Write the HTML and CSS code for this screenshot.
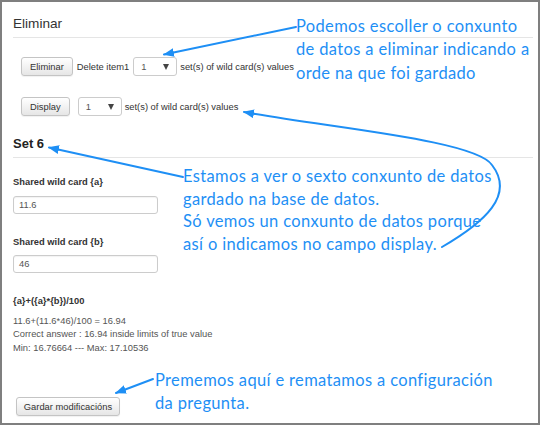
FILE: index.html
```html
<!DOCTYPE html>
<html lang="gl">
<head>
<meta charset="utf-8">
<title>Eliminar</title>
<link rel="stylesheet" href="styles.css">
</head>
<body>
<div class="frame">
  <h2 class="section-title">Eliminar</h2>
  <div class="controls">
    <div class="row row-delete">
      <button class="btn">Eliminar</button>
      <span class="txt">Delete item1</span>
      <span class="select"><span class="select-value">1</span><span class="caret"></span></span>
      <span class="txt">set(s) of wild card(s) values</span>
    </div>
    <div class="row row-display">
      <button class="btn">Display</button>
      <span class="select"><span class="select-value">1</span><span class="caret"></span></span>
      <span class="txt">set(s) of wild card(s) values</span>
    </div>
  </div>

  <h3 class="set-title">Set 6</h3>

  <div class="field field-a">
    <div class="field-label">Shared wild card {a}</div>
    <div class="input">11.6</div>
  </div>
  <div class="field field-b">
    <div class="field-label">Shared wild card {b}</div>
    <div class="input">46</div>
  </div>

  <div class="formula">{a}+({a}*{b})/100</div>
  <div class="result">
    <div>11.6+(11.6*46)/100 = 16.94</div>
    <div>Correct answer : 16.94 inside limits of true value</div>
    <div>Min: 16.76664 --- Max: 17.10536</div>
  </div>

  <button class="btn btn-save">Gardar modificacións</button>

  <svg class="arrows" width="540" height="425" viewBox="0 0 540 425" xmlns="http://www.w3.org/2000/svg">
    <defs>
      <marker id="head" markerWidth="5.5" markerHeight="4.4" refX="5" refY="2.2" orient="auto" markerUnits="strokeWidth">
        <path d="M0,0 L5.5,2.2 L0,4.4 Z" fill="#1e8ff5"/>
      </marker>
    </defs>
    <g fill="none" stroke="#1e8ff5" stroke-width="2" stroke-linecap="round">
      <path d="M296,27 L164,54.5" marker-end="url(#head)"/>
      <path d="M442,247 C485,222 515,195 492,165 C475,140 330,128 244,112" marker-end="url(#head)"/>
      <path d="M183,177 L49,147.5" marker-end="url(#head)"/>
      <path d="M153,379 L116,393" marker-end="url(#head)"/>
    </g>
  </svg>

  <div class="note note-1">Podemos escoller o conxunto<br>de datos a eliminar indicando a<br>orde na que foi gardado</div>
  <div class="note note-2">Estamos a ver o sexto conxunto de datos<br>gardado na base de datos.<br>Só vemos un conxunto de datos porque<br>así o indicamos no campo display.</div>
  <div class="note note-3">Prememos aquí e rematamos a configuración<br>da pregunta.</div>
</div>
</body>
</html>
```

FILE: styles.css
```css
html, body {
  margin: 0;
  padding: 0;
  background: #ffffff;
}

.frame {
  position: relative;
  box-sizing: border-box;
  width: 540px;
  height: 425px;
  border: 2px solid #7f7f7f;
  padding: 14px 5px 0 11px;
  font-family: "Liberation Sans", Arial, sans-serif;
  font-size: 9.35px;
  color: #333333;
  overflow: hidden;
}

.section-title {
  margin: 0;
  font-size: 13.6px;
  font-weight: normal;
  line-height: 16px;
  padding-bottom: 5px;
  border-bottom: 1px solid #e5e5e5;
  color: #333333;
}

.controls {
  display: flex;
  flex-direction: column;
  gap: 21px;
  margin-top: 19px;
  padding-left: 8px;
}

.row {
  display: flex;
  align-items: center;
  height: 19px;
}

.row-delete .txt:first-of-type {
  margin: 0 4px 0 4px;
}

.row-display .select {
  margin-left: 8px;
}

.select + .txt {
  margin-left: 3px;
}

.btn {
  box-sizing: border-box;
  height: 19px;
  padding: 0 8px;
  margin: 0;
  font-family: "Liberation Sans", Arial, sans-serif;
  font-size: 9.35px;
  color: #333333;
  background: linear-gradient(#ffffff, #e6e6e6);
  border: 1px solid #c4c4c4;
  border-radius: 3px;
  box-shadow: 0 1px 1px rgba(0, 0, 0, 0.06);
  line-height: 16px;
}

.select {
  box-sizing: border-box;
  display: flex;
  align-items: center;
  justify-content: space-between;
  width: 44px;
  height: 19px;
  padding: 0 7px 0 7px;
  border: 1px solid #cccccc;
  border-radius: 3px;
  background: #ffffff;
  color: #555555;
}

.caret {
  width: 0;
  height: 0;
  border-left: 3px solid transparent;
  border-right: 3px solid transparent;
  border-top: 6px solid #444444;
}

.set-title {
  margin: 20px 0 0 0;
  font-size: 13px;
  font-weight: bold;
  line-height: 16px;
  padding-bottom: 5px;
  border-bottom: 1px solid #e5e5e5;
  color: #222222;
}

.field-a {
  margin-top: 18px;
}

.field-b {
  margin-top: 22px;
}

.field-label {
  font-weight: bold;
  line-height: 12px;
  margin-bottom: 7.5px;
  color: #333333;
}

.input {
  box-sizing: border-box;
  width: 145px;
  height: 18px;
  padding-left: 5px;
  border: 1px solid #cccccc;
  border-radius: 3px;
  line-height: 16px;
  color: #555555;
  box-shadow: inset 0 1px 1px rgba(0, 0, 0, 0.05);
}

.formula {
  margin-top: 21.5px;
  font-weight: bold;
  line-height: 12px;
  color: #333333;
}

.result {
  margin-top: 8.5px;
  line-height: 13.4px;
  color: #555555;
}

.btn-save {
  display: block;
  margin: 42px 0 0 3px;
  width: 104px;
  padding: 0;
}

.arrows {
  position: absolute;
  left: -2px;
  top: -2px;
  pointer-events: none;
}

.note {
  position: absolute;
  font-family: Lato, "Open Sans", sans-serif;
  font-size: 16.5px;
  letter-spacing: 0.35px;
  color: #1e8ff5;
  white-space: nowrap;
}

.note-1 {
  left: 294px;
  top: 12.5px;
  line-height: 23.5px;
}

.note-2 {
  left: 181px;
  top: 163px;
  line-height: 22.5px;
}

.note-3 {
  left: 153px;
  top: 366.5px;
  line-height: 23px;
}
```
